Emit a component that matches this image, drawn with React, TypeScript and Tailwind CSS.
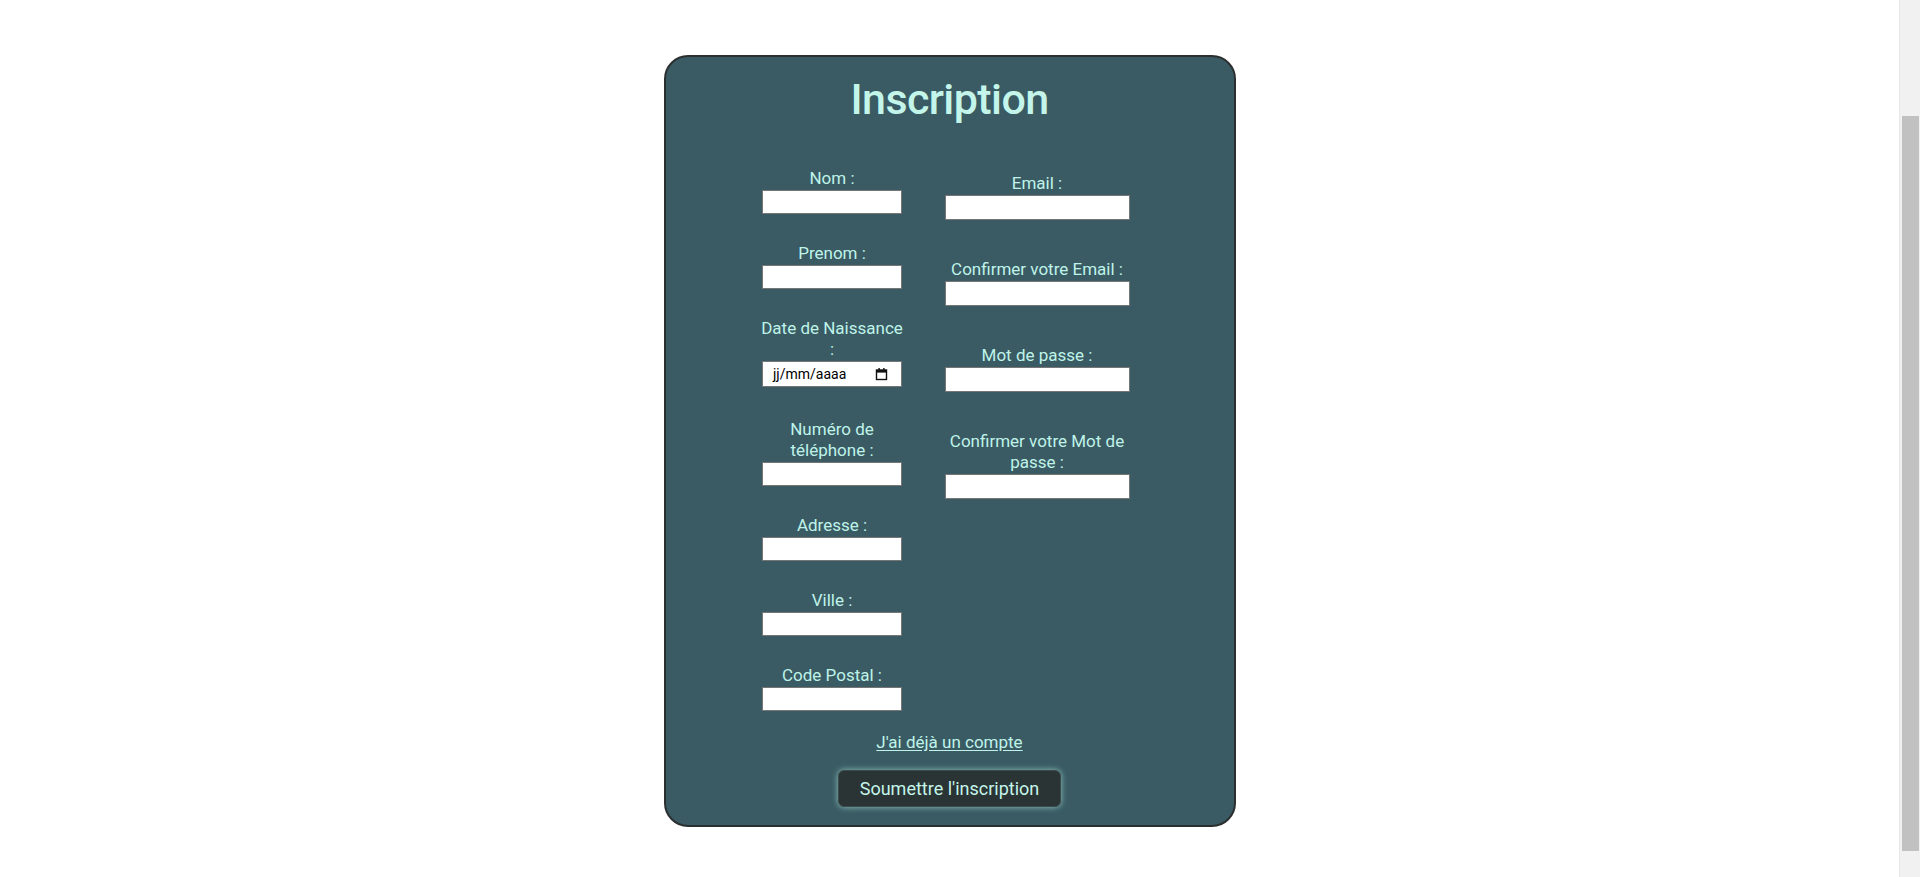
import { useEffect } from "react";

type Field = { lines: string[]; kind?: "date" };

const leftFields: Field[] = [
  { lines: ["Nom :"] },
  { lines: ["Prenom :"] },
  { lines: ["Date de Naissance", ":"], kind: "date" },
  { lines: ["Numéro de", "téléphone :"] },
  { lines: ["Adresse :"] },
  { lines: ["Ville :"] },
  { lines: ["Code Postal :"] },
];

const rightFields: Field[] = [
  { lines: ["Email :"] },
  { lines: ["Confirmer votre Email :"] },
  { lines: ["Mot de passe :"] },
  { lines: ["Confirmer votre Mot de", "passe :"] },
];

function Label({ lines }: { lines: string[] }) {
  return (
    <label className="text-center text-[17px] leading-[21px] text-[#bff3e9] whitespace-nowrap">
      {lines.map((l, i) => (
        <span key={i} className="block">
          {l}
        </span>
      ))}
    </label>
  );
}

function DateInput() {
  return (
    <div className="mt-[1px] mb-[3px] flex h-[26px] w-[140px] items-center justify-between border border-[#767676] bg-white pl-[10px] pr-[13px]">
      <span className="text-[14px] text-black">jj/mm/aaaa</span>
      <svg width="13" height="14" viewBox="0 0 13 14" aria-hidden>
        <rect x="1.5" y="3" width="10" height="9.5" fill="none" stroke="#111" strokeWidth="1.4" />
        <rect x="1.5" y="3" width="10" height="2.6" fill="#111" />
        <rect x="3.4" y="1" width="1.4" height="2.5" fill="#111" />
        <rect x="8.2" y="1" width="1.4" height="2.5" fill="#111" />
      </svg>
    </div>
  );
}

export default function App() {
  useEffect(() => {
    window.scrollTo(0, 138);
  }, []);

  return (
    <div className="min-h-[1046px] bg-white pt-[193px] pb-[83px] pr-[21px] font-['Roboto',sans-serif]">
      {/* barre de défilement */}
      <div aria-hidden className="fixed top-0 right-0 h-full w-[21px] border-l border-[#e8e8e8] bg-[#f1f1f1]">
        <div className="mx-auto mt-[116px] h-[735px] w-[17px] bg-[#c1c1c1]" />
      </div>

      <form
        onSubmit={e => e.preventDefault()}
        className="mx-auto flex w-[572px] flex-col items-center rounded-[24px] border-2 border-[#2b2f30] bg-[#3a5b63] pt-[16px] pb-[18px]"
      >
        <h1 className="text-[43px] leading-[53px] font-medium tracking-[-0.6px] text-[#c4f5ea]">
          Inscription
        </h1>

        <div className="mt-[42px] flex w-full items-start justify-center gap-[35px] pr-[10px]">
          {/* colonne gauche */}
          <div className="flex w-[150px] flex-col items-center gap-[29px]">
            {leftFields.map((f, i) => (
              <div key={i} className="flex flex-col items-center">
                <Label lines={f.lines} />
                {f.kind === "date" ? (
                  <DateInput />
                ) : (
                  <input
                    type="text"
                    className="mt-[1px] h-[24px] w-[140px] border border-[#767676] bg-white px-1 text-[13px] outline-none"
                  />
                )}
              </div>
            ))}
          </div>

          {/* colonne droite */}
          <div className="flex w-[190px] flex-col items-center gap-[39px] pt-[5px]">
            {rightFields.map((f, i) => (
              <div key={i} className="flex flex-col items-center">
                <Label lines={f.lines} />
                <input
                  type={f.lines[0].includes("Mot de") ? "password" : "email"}
                  className="mt-[1px] h-[25px] w-[185px] border border-[#767676] bg-white px-1 text-[13px] outline-none"
                />
              </div>
            ))}
          </div>
        </div>

        <a href="#" className="mt-[21px] text-[17px] leading-[21px] text-[#bff3e9] underline underline-offset-2">
          J'ai déjà un compte
        </a>

        <button
          type="submit"
          className="mt-[17px] h-[37px] rounded-[6px] border border-[#3d4a4a] bg-[#2b3434] px-[21px] text-[18px] text-[#c4f5ea] shadow-[0_0_6px_rgba(170,235,225,0.75)]"
        >
          Soumettre l'inscription
        </button>
      </form>
    </div>
  );
}
